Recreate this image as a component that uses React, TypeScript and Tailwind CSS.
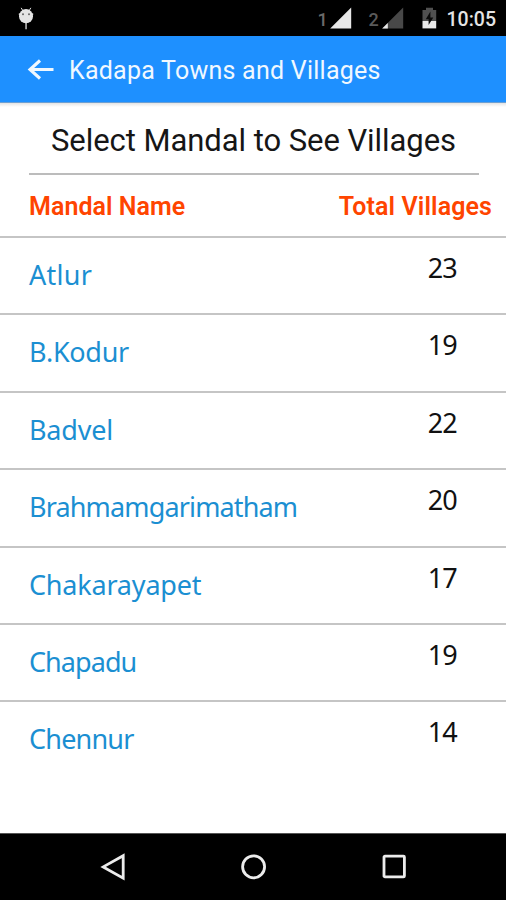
const mandals = [
  { name: "Atlur", total: 23, tracking: "tracking-[0.3px]" },
  { name: "B.Kodur", total: 19, tracking: "tracking-[-0.3px]" },
  { name: "Badvel", total: 22, tracking: "tracking-[-0.2px]" },
  { name: "Brahmamgarimatham", total: 20, tracking: "tracking-[-0.85px]" },
  { name: "Chakarayapet", total: 17, tracking: "tracking-[-0.2px]" },
  { name: "Chapadu", total: 19, tracking: "tracking-[-0.95px]" },
  { name: "Chennur", total: 14, tracking: "tracking-[-0.8px]" },
];

function DebugIcon() {
  return (
    <svg width="16" height="24" viewBox="0 0 16 24" fill="#e4e4e4">
      <path d="M3.4 1.2 5 4M12.6 1.2 11 4" stroke="#e4e4e4" strokeWidth="1" strokeLinecap="round" />
      <path d="M0.8 6.8 2 7.5M15.2 6.8 14 7.5" stroke="#e4e4e4" strokeWidth="1.2" />
      <ellipse cx="8" cy="9.2" rx="7" ry="7.1" />
      <path d="M7.4 16h1.3v6.3H7.4z" />
      <circle cx="5" cy="7.3" r="1" fill="#666" />
      <circle cx="11" cy="7.3" r="1" fill="#666" />
    </svg>
  );
}

function StatusBar() {
  return (
    <div className="flex h-9 items-start bg-black pl-[18px] text-[#e4e4e4]">
      <div className="pt-[7px]">
        <DebugIcon />
      </div>
      <div className="ml-auto flex h-9 items-start pr-[10px]">
        <span className="w-[11px] pt-[8px] text-[18px] leading-6 font-medium text-[#6a6a6a]">1</span>
        <svg className="mt-[7px] ml-[1px]" width="22" height="22" viewBox="0 0 22 22">
          <path d="M21.2 0.5V21.5H0.2z" fill="#e8e8e8" />
        </svg>
        <span className="ml-[17px] w-[11px] pt-[8px] text-[18px] leading-6 font-medium text-[#5a5a5a]">2</span>
        <svg className="mt-[7px] ml-[2px]" width="22" height="22" viewBox="0 0 22 22">
          <path d="M21.2 0.5V21.5H0.2z" fill="#484848" />
          <path d="M5.8 16V21.5H0.2z" fill="#e8e8e8" />
        </svg>
        <svg className="mt-[7px] ml-[18px]" width="15" height="22" viewBox="0 0 15 22">
          <path d="M4 0.8H11V3H14.2V14H0.5V3H4z" fill="#505050" />
          <path d="M0.5 14H14.2V21.4H0.5z" fill="#eaeaea" />
          <path d="M8.4 4.6 3.8 12.3H6.6V18L11.3 10.4H8.4z" fill="#0a0a0a" />
        </svg>
        <span className="ml-[10px] pt-[8px] text-[19.5px] leading-6 font-medium whitespace-nowrap">10:05</span>
      </div>
    </div>
  );
}

function AppBar() {
  return (
    <header className="flex h-[67px] items-center border-b border-[#6c9fd2] bg-[#1e90ff] pl-[27px] text-[#f0f8ff]">
      <svg width="28" height="22" viewBox="0 0 28 22" fill="none" stroke="#f0f8ff" strokeWidth="3.1">
        <path d="M2.2 11.5H26.5M13 2.5 3 11.5 13 20.5" />
      </svg>
      <h1 className="ml-[14px] pt-[3px] text-[25px] leading-8 font-[450] tracking-[0.24px] whitespace-nowrap">
        Kadapa Towns and Villages
      </h1>
    </header>
  );
}

function NavBar() {
  return (
    <nav className="flex h-[67px] items-center justify-between border-t border-[#555] bg-black px-[100px]">
      <svg width="26" height="28" viewBox="0 0 26 28" fill="none" stroke="#ececec" strokeWidth="2.8">
        <path d="M23.2 2.7V25.1L3.2 13.9z" />
      </svg>
      <svg width="28" height="28" viewBox="0 0 28 28" fill="none" stroke="#ececec" strokeWidth="2.8">
        <circle cx="13.6" cy="13.8" r="11" />
      </svg>
      <svg width="24" height="28" viewBox="0 0 24 28" fill="none" stroke="#ececec" strokeWidth="2.8">
        <rect x="2" y="3.1" width="20.4" height="20.8" rx="1" />
      </svg>
    </nav>
  );
}

export default function App() {
  return (
    <div className="flex h-[900px] w-[506px] flex-col overflow-hidden bg-white font-['Roboto',sans-serif]">
      <StatusBar />
      <AppBar />
      <main className="flex-1 overflow-hidden">
        <div className="h-[4px] bg-linear-to-b from-[#e4e4e4] to-white" />
        <h2 className="h-[66px] pt-[15px] pl-[51px] text-[31px] leading-[38px] tracking-[-0.06px] whitespace-nowrap text-[#161616]">
          Select Mandal to See Villages
        </h2>
        <div className="mr-[27px] ml-[29px] h-[2px] bg-[#bcbcbc]" />
        <div className="flex h-[61px] items-center justify-between pt-[3px] pr-[14px] pl-[29px] text-[25px] font-semibold text-[#ff4500]">
          <span className="tracking-[0.05px]">Mandal Name</span>
          <span className="tracking-[0.1px]">Total Villages</span>
        </div>
        <ul className="font-['Noto_Sans',sans-serif] text-[27px] leading-9">
          {mandals.map((m) => (
            <li
              key={m.name}
              className="flex h-[77.4px] items-start justify-between border-t-2 border-[#c5c5c5] pr-[49px] pl-[29px]"
            >
              <span className={`pt-[19px] text-[#1b8fd2] ${m.tracking}`}>{m.name}</span>
              <span className="pt-[12px] tracking-[-0.8px] text-[#111]">{m.total}</span>
            </li>
          ))}
        </ul>
      </main>
      <NavBar />
    </div>
  );
}
